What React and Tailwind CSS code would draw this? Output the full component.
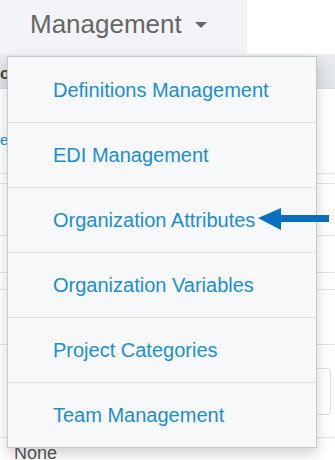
import React from "react";

const items = [
  "Definitions Management",
  "EDI Management",
  "Organization Attributes",
  "Organization Variables",
  "Project Categories",
  "Team Management",
];

const App = () => {
  return (
    <div className="relative w-[335px] h-[460px] overflow-hidden bg-white font-['Liberation_Sans',Arial,sans-serif]">
      {/* top nav */}
      <div className="flex h-[54px]">
        <div className="w-[247px] bg-[#f3f4f8] flex items-center pl-[30px] pb-[6px]">
          <span className="text-[26px] leading-none text-[#666]">Management</span>
          <span className="ml-[13px] mt-[1px] w-0 h-0 border-l-[6px] border-r-[6px] border-t-[6px] border-l-transparent border-r-transparent border-t-[#666]"></span>
        </div>
        <div className="flex-1 bg-white"></div>
      </div>

      {/* table behind the menu */}
      <div className="flex flex-col">
        <div className="h-[35px] bg-gradient-to-b from-[#e9ebef] to-[#dfe2e7] border-b border-[#d6d9de] flex items-center pt-[6px]">
          <span className="text-[16px] font-bold text-[#444]">ou</span>
        </div>
        <div className="h-[85px] border-b border-[#e3e3e3] flex items-start pt-[40px]">
          <span className="text-[15px] text-[#1b8ed0]">es</span>
        </div>
        <div className="h-[10px] border-b border-[#e3e3e3]"></div>
        <div className="h-[52px] border-b border-[#e3e3e3]"></div>
        <div className="h-[37px] border-b border-[#e3e3e3]"></div>
        <div className="h-[17px] border-b border-[#e3e3e3]"></div>
        <div className="h-[55px] border-b border-[#e3e3e3]"></div>
        <div className="h-[93px] border-b border-[#e3e3e3] flex items-center justify-end pr-[4px]">
          <div className="w-[40px] h-[47px] rounded-[4px] border border-[#dcdcdc]"></div>
        </div>
        <div className="h-[22px] flex items-start pl-[14px] pt-[6px]">
          <span className="text-[18px] leading-none text-[#555]">None</span>
        </div>
      </div>

      {/* dropdown menu */}
      <div className="absolute left-[7px] top-[56px] w-[310px] bg-[#f7f8fa] border border-[#c8c8c8] shadow-[0_6px_12px_rgba(0,0,0,0.18)]">
        {items.map((label, i) => (
          <div
            key={label}
            className={`h-[65px] flex items-center pl-[45px] text-[20px] text-[#1b8ed0] ${i > 0 ? "border-t border-[#e2e4e8]" : ""}`}
          >
            {label}
          </div>
        ))}
      </div>

      {/* pointer arrow */}
      <svg className="absolute left-[256px] top-[206px]" width="76" height="26" viewBox="0 0 76 26">
        <polygon points="2,12 25,2 25,9 73,9 73,16 25,16 25,24" fill="#0b6fc0" />
      </svg>
    </div>
  );
};

export default App;
